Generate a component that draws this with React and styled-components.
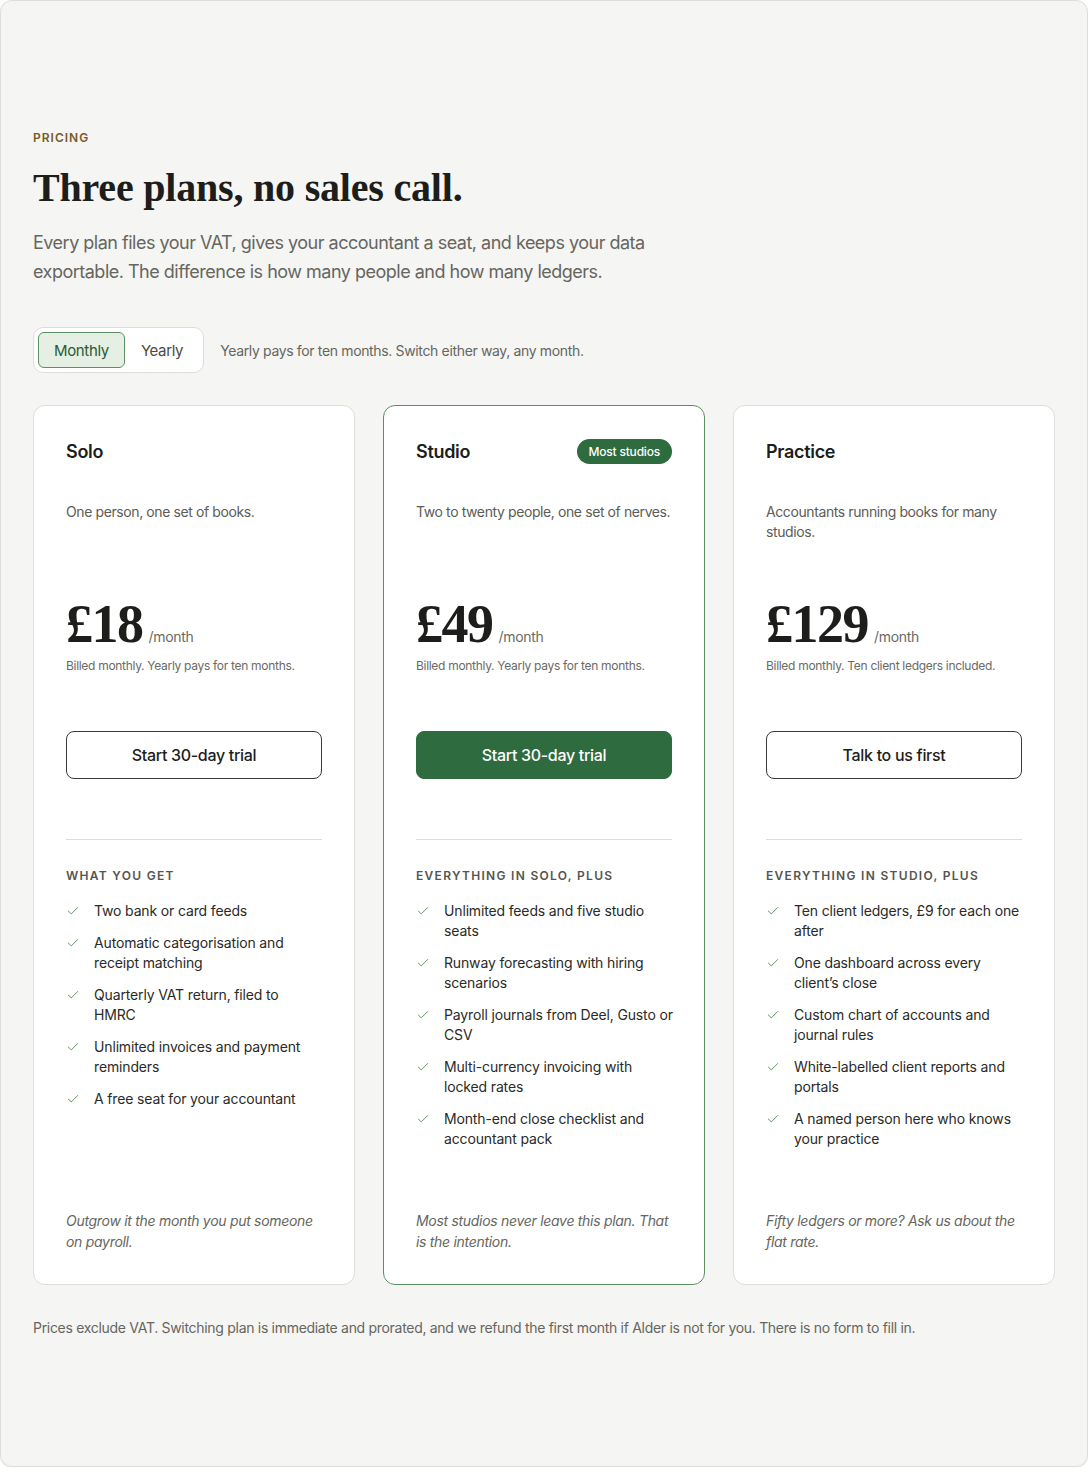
import React, { useState } from "react";
import styled, { createGlobalStyle } from "styled-components";

const GlobalStyle = createGlobalStyle`
  html, body {
    margin: 0;
    padding: 0;
    background: #ffffff;
  }
  body {
    font-family: Inter, "Noto Sans", sans-serif;
    color: #1d1d1b;
    -webkit-font-smoothing: antialiased;
  }
  * {
    box-sizing: border-box;
  }
`;

const plans = [
  {
    id: "solo",
    name: "Solo",
    blurb: "One person, one set of books.",
    price: "£18",
    billed: "Billed monthly. Yearly pays for ten months.",
    cta: "Start 30-day trial",
    listTitle: "What you get",
    features: [
      "Two bank or card feeds",
      "Automatic categorisation and receipt matching",
      "Quarterly VAT return, filed to HMRC",
      "Unlimited invoices and payment reminders",
      "A free seat for your accountant",
    ],
    footnote: "Outgrow it the month you put someone on payroll.",
  },
  {
    id: "studio",
    name: "Studio",
    badge: "Most studios",
    featured: true,
    blurb: "Two to twenty people, one set of nerves.",
    price: "£49",
    billed: "Billed monthly. Yearly pays for ten months.",
    cta: "Start 30-day trial",
    listTitle: "Everything in Solo, plus",
    features: [
      "Unlimited feeds and five studio seats",
      "Runway forecasting with hiring scenarios",
      "Payroll journals from Deel, Gusto or CSV",
      "Multi-currency invoicing with locked rates",
      "Month-end close checklist and accountant pack",
    ],
    footnote: "Most studios never leave this plan. That is the intention.",
  },
  {
    id: "practice",
    name: "Practice",
    blurb: "Accountants running books for many studios.",
    price: "£129",
    billed: "Billed monthly. Ten client ledgers included.",
    cta: "Talk to us first",
    listTitle: "Everything in Studio, plus",
    features: [
      "Ten client ledgers, £9 for each one after",
      "One dashboard across every client’s close",
      "Custom chart of accounts and journal rules",
      "White-labelled client reports and portals",
      "A named person here who knows your practice",
    ],
    footnote: "Fifty ledgers or more? Ask us about the flat rate.",
  },
];

const CheckIcon = () => (
  <svg width="14" height="14" viewBox="0 0 24 24" fill="none" stroke="#5f9366" strokeWidth="1.7" strokeLinecap="round" strokeLinejoin="round">
    <path d="M20 6 9 17l-5-5" />
  </svg>
);

const App = () => {
  const [cycle, setCycle] = useState("monthly");

  return (
    <>
      <GlobalStyle />
      <Frame>
        <Eyebrow>Pricing</Eyebrow>
        <Heading>Three plans, no sales call.</Heading>
        <Lede>
          Every plan files your VAT, gives your accountant a seat, and keeps your data
          exportable. The difference is how many people and how many ledgers.
        </Lede>

        <ToggleRow>
          <Toggle>
            <ToggleButton $active={cycle === "monthly"} onClick={() => setCycle("monthly")}>
              Monthly
            </ToggleButton>
            <ToggleButton $active={cycle === "yearly"} onClick={() => setCycle("yearly")}>
              Yearly
            </ToggleButton>
          </Toggle>
          <ToggleNote>Yearly pays for ten months. Switch either way, any month.</ToggleNote>
        </ToggleRow>

        <CardGrid>
          {plans.map(plan => (
            <Card key={plan.id} $featured={plan.featured}>
              <CardHeader>
                <PlanName>{plan.name}</PlanName>
                {plan.badge && <Badge>{plan.badge}</Badge>}
              </CardHeader>
              <Blurb>{plan.blurb}</Blurb>
              <PriceRow>
                <Price>{plan.price}</Price>
                <Per>/month</Per>
              </PriceRow>
              <Billed>{plan.billed}</Billed>
              <CtaButton $featured={plan.featured}>{plan.cta}</CtaButton>
              <Divider />
              <ListTitle>{plan.listTitle}</ListTitle>
              <FeatureList>
                {plan.features.map(f => (
                  <Feature key={f}>
                    <CheckWrap>
                      <CheckIcon />
                    </CheckWrap>
                    <span>{f}</span>
                  </Feature>
                ))}
              </FeatureList>
              <Footnote>{plan.footnote}</Footnote>
            </Card>
          ))}
        </CardGrid>

        <SmallPrint>
          Prices exclude VAT. Switching plan is immediate and prorated, and we refund the first
          month if Alder is not for you. There is no form to fill in.
        </SmallPrint>
      </Frame>
    </>
  );
};

export default App;

const Frame = styled.div`
  width: 1088px;
  min-height: 1467px;
  background: #f5f5f3;
  border: 1px solid #deded9;
  border-radius: 12px;
  box-shadow: 0 1px 2px rgba(0, 0, 0, 0.08);
  padding: 128px 32px 120px 32px;
`;

const Eyebrow = styled.div`
  font-size: 12px;
  line-height: 18px;
  font-weight: 600;
  letter-spacing: 1px;
  text-transform: uppercase;
  color: #7a5a1f;
`;

const Heading = styled.h1`
  margin: 20px 0 0;
  font-family: "Liberation Serif", "DejaVu Serif", serif;
  font-size: 40px;
  line-height: 42px;
  font-weight: 700;
  letter-spacing: -0.2px;
  color: #1d1d1b;
`;

const Lede = styled.p`
  margin: 19px 0 0;
  max-width: 640px;
  font-size: 18px;
  line-height: 29px;
  color: #66665f;
  letter-spacing: -0.5px;
`;

const ToggleRow = styled.div`
  display: flex;
  align-items: center;
  gap: 16px;
  margin-top: 41px;
`;

const Toggle = styled.div`
  display: flex;
  gap: 0;
  padding: 4px;
  background: #ffffff;
  border: 1px solid #deded9;
  border-radius: 10px;
`;

const ToggleButton = styled.button`
  height: 36px;
  padding: 0 15px;
  font-family: inherit;
  font-size: 15px;
  letter-spacing: -0.35px;
  border-radius: 6px;
  cursor: pointer;
  border: 1px solid ${p => (p.$active ? "#5e8f63" : "transparent")};
  background: ${p => (p.$active ? "#e5efe4" : "transparent")};
  color: ${p => (p.$active ? "#2a5a33" : "#4a4a45")};
`;

const ToggleNote = styled.span`
  font-size: 14px;
  color: #66665f;
  letter-spacing: -0.35px;
`;

const CardGrid = styled.div`
  display: grid;
  grid-template-columns: repeat(3, 1fr);
  gap: 28px;
  margin-top: 32px;
`;

const Card = styled.div`
  display: flex;
  flex-direction: column;
  background: #ffffff;
  border: 1px solid ${p => (p.$featured ? "#5e8f63" : "#deded9")};
  border-radius: 12px;
  padding: 32px 32px 32px;
`;

const CardHeader = styled.div`
  display: flex;
  align-items: center;
  justify-content: space-between;
  height: 26px;
`;

const PlanName = styled.h2`
  margin: 0;
  font-size: 18px;
  font-weight: 600;
  letter-spacing: -0.3px;
  color: #1d1d1b;
`;

const Badge = styled.span`
  display: inline-flex;
  align-items: center;
  height: 25px;
  padding: 0 12px;
  border-radius: 999px;
  background: #2e6b3e;
  color: #ffffff;
  font-size: 12px;
  font-weight: 500;
  letter-spacing: -0.2px;
`;

const Blurb = styled.p`
  margin: 38px 0 0;
  min-height: 40px;
  font-size: 14px;
  line-height: 20px;
  color: #5c5c56;
  letter-spacing: -0.4px;
`;

const PriceRow = styled.div`
  display: flex;
  align-items: baseline;
  gap: 6px;
  margin-top: 54px;
`;

const Price = styled.span`
  font-family: "Liberation Serif", "DejaVu Serif", serif;
  font-size: 54px;
  line-height: 56px;
  font-weight: 700;
  letter-spacing: -1.5px;
  color: #1d1d1b;
`;

const Per = styled.span`
  font-size: 14px;
  color: #6a6a64;
  letter-spacing: -0.3px;
`;

const Billed = styled.p`
  margin: 5px 0 0;
  font-size: 12px;
  line-height: 18px;
  color: #6a6a64;
  letter-spacing: -0.3px;
`;

const CtaButton = styled.button`
  margin-top: 56px;
  height: 48px;
  width: 100%;
  border-radius: 8px;
  font-family: inherit;
  font-size: 16px;
  font-weight: 500;
  letter-spacing: -0.3px;
  cursor: pointer;
  border: 1px solid ${p => (p.$featured ? "#2e6b3e" : "#3a3a36")};
  background: ${p => (p.$featured ? "#2e6b3e" : "#ffffff")};
  color: ${p => (p.$featured ? "#ffffff" : "#1d1d1b")};
`;

const Divider = styled.hr`
  margin: 60px 0 0;
  border: none;
  border-top: 1px solid #deded9;
`;

const ListTitle = styled.h3`
  margin: 28px 0 0;
  font-size: 12px;
  line-height: 16px;
  font-weight: 600;
  letter-spacing: 1.3px;
  text-transform: uppercase;
  color: #55554f;
`;

const FeatureList = styled.ul`
  list-style: none;
  margin: 17px -2px 0 0;
  padding: 0;
  display: flex;
  flex-direction: column;
  gap: 12px;
  flex: 1;
`;

const Feature = styled.li`
  display: flex;
  gap: 14px;
  font-size: 14px;
  line-height: 20px;
  color: #2a2a27;
  letter-spacing: -0.15px;
`;

const CheckWrap = styled.span`
  flex: none;
  display: flex;
  align-items: center;
  height: 20px;
`;

const Footnote = styled.p`
  margin: 61px 0 0;
  font-size: 14px;
  line-height: 21px;
  font-style: italic;
  color: #66665f;
  letter-spacing: -0.3px;
`;

const SmallPrint = styled.p`
  margin: 33px 0 0;
  font-size: 14px;
  line-height: 20px;
  color: #66665f;
  letter-spacing: -0.3px;
`;
